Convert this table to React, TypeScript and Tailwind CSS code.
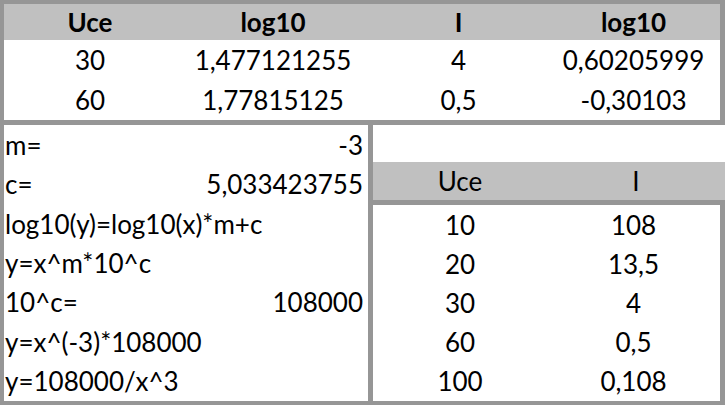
import React from 'react';

const topHeader = ['Uce', 'log10', 'I', 'log10'];
const topRows = [
  ['30', '1,477121255', '4', '0,60205999'],
  ['60', '1,77815125', '0,5', '-0,30103'],
];

const calcRows: [string, string][] = [
  ['m=', '-3'],
  ['c=', '5,033423755'],
  ['log10(y)=log10(x)*m+c', ''],
  ['y=x^m*10^c', ''],
  ['10^c=', '108000'],
  ['y=x^(-3)*108000', ''],
  ['y=108000/x^3', ''],
];

const pointRows = [
  ['10', '108'],
  ['20', '13,5'],
  ['30', '4'],
  ['60', '0,5'],
  ['100', '0,108'],
];

const App: React.FC = () => {
  return (
    <div className="w-[725px] h-[405px] bg-white flex flex-col font-['Lato',sans-serif] text-[26px] leading-none text-black">
      {/* top table */}
      <div className="border-[#969696] border-t-4 border-l-4 border-r-[5px] border-b-[5px]">
        <div className="grid grid-cols-[172px_194px_177px_173px] h-[36px] bg-[#c0c0c0] font-bold">
          {topHeader.map((h, i) => (
            <div key={i} className="flex items-center justify-center">
              {h}
            </div>
          ))}
        </div>
        {topRows.map((row, r) => (
          <div key={r} className="grid grid-cols-[172px_194px_177px_173px] h-[40px]">
            {row.map((cell, i) => (
              <div key={i} className="flex items-center justify-center">
                {cell}
              </div>
            ))}
          </div>
        ))}
      </div>

      {/* bottom area */}
      <div className="flex h-[280px] border-l-4 border-b-4 border-[#969696]">
        <div className="w-[364px] grid grid-rows-7">
          {calcRows.map(([label, value], i) => (
            <div key={i} className="flex items-center justify-between pl-[1px] pr-[5px] whitespace-nowrap">
              <span>{label}</span>
              <span>{value}</span>
            </div>
          ))}
        </div>
        <div className="w-[5px] bg-[#969696]" />
        <div className="flex-1 flex flex-col">
          <div className="h-[37px]" />
          <div className="grid grid-cols-[174px_1fr] h-[38px] bg-[#c0c0c0] border-b-[5px] border-[#969696] box-content">
            <div className="flex items-center justify-center">Uce</div>
            <div className="flex items-center justify-center">I</div>
          </div>
          <div className="flex-1 grid grid-rows-5 border-r-[5px] border-[#969696]">
            {pointRows.map((row, r) => (
              <div key={r} className="grid grid-cols-[174px_1fr]">
                {row.map((cell, i) => (
                  <div key={i} className="flex items-center justify-center">
                    {cell}
                  </div>
                ))}
              </div>
            ))}
          </div>
        </div>
      </div>
    </div>
  );
};

export default App;
